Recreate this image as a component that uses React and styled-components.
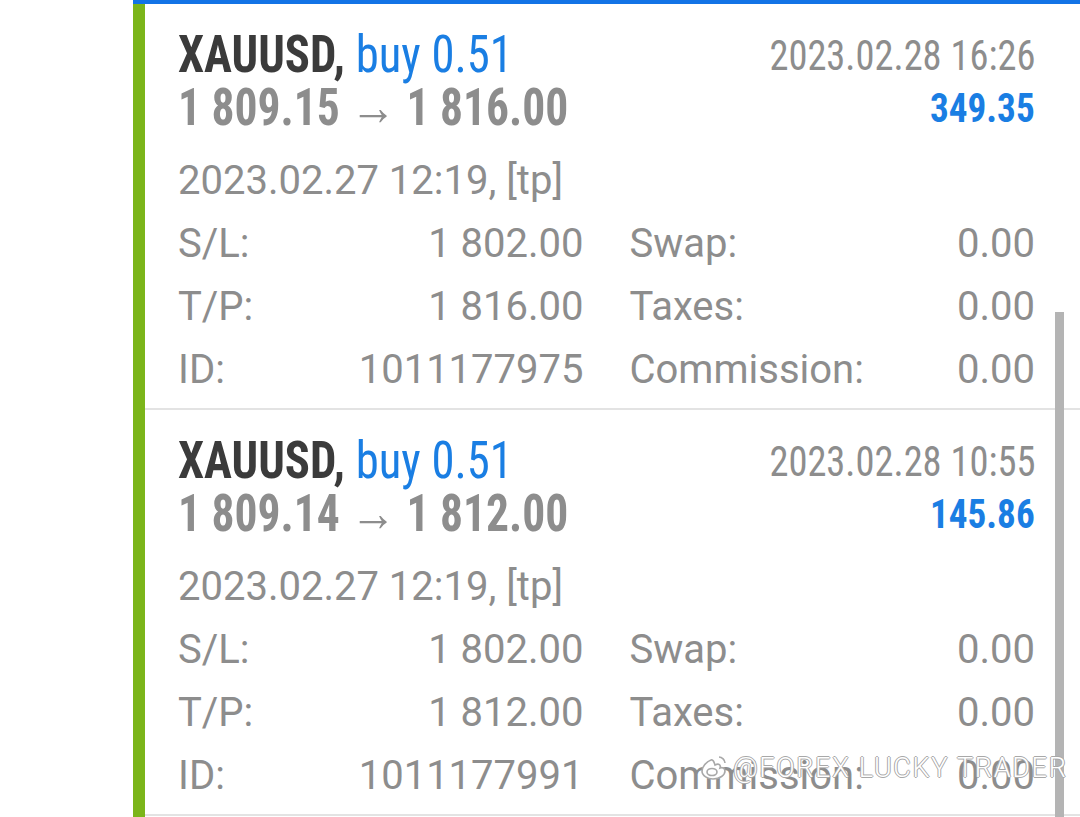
import React from "react";
import styled, { createGlobalStyle } from "styled-components";

const GlobalStyle = createGlobalStyle`
    html, body {
        margin: 0;
        padding: 0;
        background: #ffffff;
        font-family: Roboto, "Liberation Sans", sans-serif;
    }
`;

const Page = styled.div`
    position: relative;
    display: flex;
    height: 817px;
    overflow: hidden;
    background: #ffffff;
`;

const Gutter = styled.div`
    width: 133px;
    flex-shrink: 0;
`;

const Main = styled.div`
    flex: 1;
    display: flex;
    flex-direction: column;
    border-top: 4px solid #1273e6;
`;

const List = styled.div`
    flex: 1;
    border-left: 12px solid #7bb51a;
`;

const Card = styled.div`
    box-sizing: border-box;
    height: 406px;
    padding: 24px 45px 0 33px;
    border-bottom: 2px solid #e3e3e3;
`;

const Header = styled.div`
    display: flex;
    justify-content: space-between;
    align-items: flex-start;
`;

const Column = styled.div`
    display: flex;
    flex-direction: column;
    align-items: ${(p) => (p.$right ? "flex-end" : "flex-start")};
    margin-top: ${(p) => (p.$right ? "1px" : "0")};
`;

// condensed width plus a little horizontal squeeze to match the app font
const Condensed = styled.div`
    display: inline-block;
    font-family: Roboto, "Liberation Sans", sans-serif;
    font-stretch: 75%;
    line-height: 53px;
    white-space: nowrap;
    font-size: ${(p) => p.$size}px;
    font-weight: ${(p) => (p.$bold ? 700 : 400)};
    color: ${(p) => p.$color};
    transform: scaleX(${(p) => p.$scale});
    transform-origin: ${(p) => (p.$right ? "right" : "left")} center;
`;

const Blue = styled.span`
    font-weight: 400;
    color: #1a7ee3;
`;

const OpenTime = styled.div`
    margin-top: 14px;
    font-size: 40px;
    line-height: 63px;
    color: #8d8d8d;
    white-space: nowrap;
`;

const Grid = styled.div`
    display: grid;
    grid-template-columns: 1fr 1fr;
    column-gap: 46px;
`;

const Field = styled.div`
    display: flex;
    justify-content: space-between;
    font-size: 40px;
    line-height: 63px;
    color: #8d8d8d;
    white-space: nowrap;
`;

const Scrollbar = styled.div`
    position: absolute;
    left: 1055px;
    top: 312px;
    bottom: 0;
    width: 9px;
    background: #b4b4b4;
`;

const Watermark = styled.div`
    position: absolute;
    left: 700px;
    top: 752px;
    display: flex;
    align-items: center;
    gap: 5px;
    font-size: 27px;
    font-weight: 300;
    letter-spacing: 1.7px;
    color: #ffffff;
    text-shadow: 1px 0 0 #a8a8a8, -1px 0 0 #a8a8a8, 0 1px 0 #a8a8a8, 0 -1px 0 #a8a8a8;
    white-space: nowrap;
`;

const trades = [
    {
        close: "1 816.00",
        open: "1 809.15",
        closeTime: "2023.02.28 16:26",
        profit: "349.35",
        sl: "1 802.00",
        tp: "1 816.00",
        id: "1011177975",
    },
    {
        close: "1 812.00",
        open: "1 809.14",
        closeTime: "2023.02.28 10:55",
        profit: "145.86",
        sl: "1 802.00",
        tp: "1 812.00",
        id: "1011177991",
    },
];

const WeiboMark = () => (
    <svg width="28" height="26" viewBox="0 0 28 26" fill="none" stroke="#a8a8a8" strokeWidth="1.6">
        <path d="M11 5c-5 2-9 7-9 11 0 5 6 8 11 8 7 0 12-4 12-8 0-3-3-4-5-3 1-3-1-5-5-3-1-3-2-6-4-5z" fill="#fff" />
        <ellipse cx="12" cy="17" rx="5" ry="3.5" />
        <path d="M19 2c3 0 6 3 6 6" />
    </svg>
);

const TradeCard = ({ trade }) => (
    <Card>
        <Header>
            <Column>
                <Condensed $size={52} $bold $scale={0.897} $color="#3b3b3b">
                    XAUUSD, <Blue>buy 0.51</Blue>
                </Condensed>
                <Condensed $size={52} $bold $scale={0.876} $color="#8d8d8d">
                    {trade.open} → {trade.close}
                </Condensed>
            </Column>
            <Column $right>
                <Condensed $size={42} $right $scale={0.916} $color="#8d8d8d">
                    {trade.closeTime}
                </Condensed>
                <Condensed $size={40} $bold $right $scale={0.93} $color="#1a7ee3">
                    {trade.profit}
                </Condensed>
            </Column>
        </Header>
        <OpenTime>2023.02.27 12:19, [tp]</OpenTime>
        <Grid>
            <Field>
                <span>S/L:</span>
                <span>{trade.sl}</span>
            </Field>
            <Field>
                <span>Swap:</span>
                <span>0.00</span>
            </Field>
            <Field>
                <span>T/P:</span>
                <span>{trade.tp}</span>
            </Field>
            <Field>
                <span>Taxes:</span>
                <span>0.00</span>
            </Field>
            <Field>
                <span>ID:</span>
                <span>{trade.id}</span>
            </Field>
            <Field>
                <span>Commission:</span>
                <span>0.00</span>
            </Field>
        </Grid>
    </Card>
);

export default function App() {
    return (
        <>
            <GlobalStyle />
            <Page>
                <Gutter />
                <Main>
                    <List>
                        {trades.map((t) => (
                            <TradeCard key={t.id} trade={t} />
                        ))}
                    </List>
                </Main>
                <Scrollbar />
                <Watermark>
                    <WeiboMark />
                    <span>@FOREX LUCKY TRADER</span>
                </Watermark>
            </Page>
        </>
    );
}
